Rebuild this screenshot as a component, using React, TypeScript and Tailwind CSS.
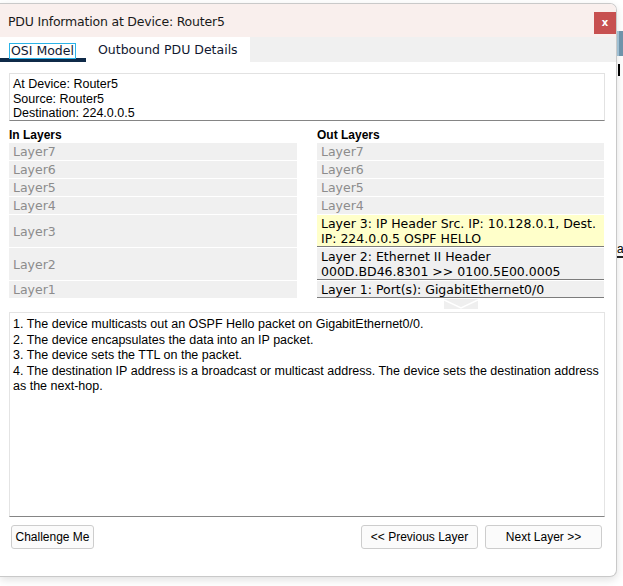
const tahoma = { fontFamily: '"DejaVu Sans", Verdana, sans-serif' };
const arial = { fontFamily: '"Liberation Sans", Arial, sans-serif' };

type Row = { left: string; right: string[]; tall?: boolean; active?: boolean; filled?: boolean };

const ROWS: Row[] = [
  { left: 'Layer7', right: ['Layer7'] },
  { left: 'Layer6', right: ['Layer6'] },
  { left: 'Layer5', right: ['Layer5'] },
  { left: 'Layer4', right: ['Layer4'] },
  { left: 'Layer3', right: ['Layer 3: IP Header Src. IP: 10.128.0.1, Dest.', 'IP: 224.0.0.5 OSPF HELLO'], tall: true, active: true, filled: true },
  { left: 'Layer2', right: ['Layer 2: Ethernet II Header', '000D.BD46.8301 >> 0100.5E00.0005'], tall: true, filled: true },
  { left: 'Layer1', right: ['Layer 1: Port(s): GigabitEthernet0/0'], filled: true },
];

const STEPS = [
  '1. The device multicasts out an OSPF Hello packet on GigabitEthernet0/0.',
  '2. The device encapsulates the data into an IP packet.',
  '3. The device sets the TTL on the packet.',
  '4. The destination IP address is a broadcast or multicast address. The device sets the destination address as the next-hop.',
];

function LayerCell({ lines, side, active, filled, tall }: { lines: string[]; side: 'in' | 'out'; active?: boolean; filled?: boolean; tall?: boolean }) {
  const bg = active ? 'bg-[#ffffca]' : 'bg-[#f0f0f0]';
  const color = filled ? 'text-black' : 'text-[#8c8c8c]';
  const border = filled && side === 'out' ? 'border-b border-[#7c7c7c]' : '';
  return (
    <div
      className={`${bg} ${color} ${border} flex flex-col justify-center px-[4px] text-[12.5px] leading-[15px] ${tall ? 'h-[32px]' : 'h-[17px]'}`}
      style={tahoma}
    >
      {lines.map((l) => (
        <span key={l} className="whitespace-nowrap">{l}</span>
      ))}
    </div>
  );
}

function Btn({ label, w }: { label: string; w: string }) {
  return (
    <button
      className={`${w} h-[24px] rounded-[3px] border border-[#cdcdcd] bg-[#fbfbfb] text-[12px] text-black`}
      style={arial}
    >
      {label}
    </button>
  );
}

export default function App() {
  return (
    <div className="w-[623px] h-[586px] bg-white overflow-hidden flex">
      <div className="mt-[3px] w-[617px] h-[574px] flex flex-col bg-white border-t border-r border-b border-[#c9c9c9] rounded-tr-[7px] rounded-br-[7px] shadow-[0_3px_8px_rgba(0,0,0,0.12)] overflow-hidden">
        {/* title bar */}
        <div className="h-[33px] bg-[#f9efed] flex justify-between">
          <span className="pl-[8px] pt-[10px] text-[12.5px] tracking-[-0.2px] leading-[16px] text-[#1a1a1a]" style={tahoma}>
            PDU Information at Device: Router5
          </span>
          <div className="mt-[8px] w-[22px] h-[22px] bg-[#c75050] flex items-center justify-center text-white text-[10px] font-bold leading-none" style={tahoma}>
            x
          </div>
        </div>

        {/* tabs */}
        <div className="h-[25px] bg-[#f0f0f0] flex">
          <div className="w-[250px] bg-white flex text-[12.5px] text-[#101830]" style={tahoma}>
            <div className="w-[86px] border-b-[4px] border-[#0f2a48] pl-[9px] pt-[5px]">
              <span className="border border-[#2bb3e8] px-px leading-[14px] inline-block">OSI Model</span>
            </div>
            <div className="ml-[12px] pt-[6px] leading-[14px]">Outbound PDU Details</div>
          </div>
        </div>

        <div className="flex-1 flex flex-col px-[9px]">
          {/* device info */}
          <div className="mt-[11px] w-[596px] h-[48px] border border-[#e2e2e2] border-b-[#858585] px-[3px] pt-[3px] text-[12.5px] leading-[14.5px] text-black" style={arial}>
            <div>At Device: Router5</div>
            <div>Source: Router5</div>
            <div>Destination: 224.0.0.5</div>
          </div>

          {/* layers */}
          <div className="mt-[7px] grid grid-cols-[288px_287px] gap-x-[20px] gap-y-px">
            <div className="text-[12px] font-bold leading-[14px] text-black" style={arial}>In Layers</div>
            <div className="text-[12px] font-bold leading-[14px] text-black" style={arial}>Out Layers</div>
            {ROWS.map((r) => (
              <div key={r.left} className="contents">
                <LayerCell lines={[r.left]} side="in" tall={r.tall} />
                <LayerCell lines={r.right} side="out" active={r.active} filled={r.filled} tall={r.tall} />
              </div>
            ))}
            <div />
            <div className="flex justify-center">
              <svg width="34" height="10" viewBox="0 0 34 10">
                <rect x="0" y="0" width="34" height="10" fill="#efefef" />
                <polyline points="0,1 17,9 34,1" fill="none" stroke="#ffffff" strokeWidth="1.4" />
              </svg>
            </div>
          </div>

          {/* description */}
          <div className="mt-[3px] w-[596px] h-[205px] border border-[#e4e4e4] border-b-[#858585] px-[3px] pt-[4px] text-[12.5px] leading-[15.6px] text-black" style={arial}>
            {STEPS.map((s) => (
              <div key={s}>{s}</div>
            ))}
          </div>

          {/* buttons */}
          <div className="mt-[8px] w-[596px] flex pl-[2px] pr-[3px]">
            <Btn label="Challenge Me" w="w-[83px]" />
            <div className="flex-1" />
            <Btn label="<< Previous Layer" w="w-[117px]" />
            <div className="w-[7px]" />
            <Btn label="Next Layer >>" w="w-[117px]" />
          </div>
        </div>
      </div>

      {/* window behind */}
      <div className="w-[6px] flex flex-col">
        <div className="mt-[31px] h-[25px] bg-[#6f93aa] border-l-2 border-[#9fbfd2]" />
        <div className="mt-[8px] ml-[1px] w-[2px] h-[12px] bg-black" />
        <div className="mt-[167px] text-[12px] leading-[12px] text-black" style={arial}>a</div>
        <div className="mt-[1px] h-[2px] bg-[#222]" />
      </div>
    </div>
  );
}
